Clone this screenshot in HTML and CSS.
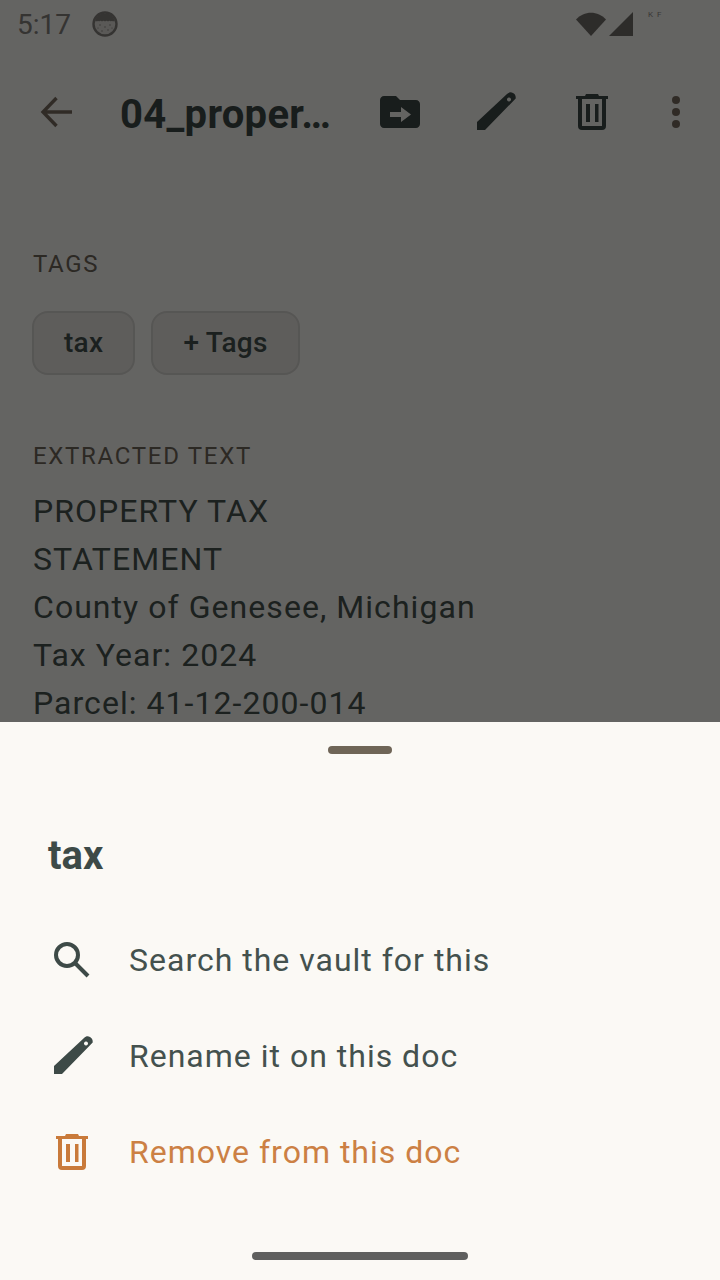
FILE: index.html
```html
<!DOCTYPE html>
<html lang="en">
<head>
<meta charset="utf-8">
<title>Document</title>
<link rel="stylesheet" href="styles.css">
</head>
<body>
<div class="screen">
  <div class="status">
    <span class="clock">5:17</span>
    <svg class="status-app" width="28" height="28" viewBox="0 0 28 28">
      <circle cx="14" cy="14" r="11.500" fill="#e1dfda" stroke="#85827e" stroke-width="2.400"/>
      <path d="M4 11C6 5 10 3.500 14 3.500S22 5 24 11c-2 1-3-1-4 .5-1-1-2-1-3 0-1-1-2-1-3 0-1-1-2-1-3 0-1-1-2-1-3 0-1-1.500-2 .5-4-.5z" fill="#85827e"/>
      <g fill="#85827e"><circle cx="9" cy="15" r=".7"/><circle cx="14" cy="17" r=".7"/><circle cx="19" cy="15" r=".7"/><circle cx="11" cy="21" r=".7"/><circle cx="17" cy="20" r=".7"/><circle cx="7" cy="18" r=".6"/><circle cx="21" cy="18" r=".6"/></g>
    </svg>
    <span class="status-gap"></span>
    <svg class="status-radio" width="64" height="28" viewBox="0 0 64 28">
      <path d="M2 8.500C10-.5 24-.5 32 8.500L17 25z" fill="#716e69"/>
      <path d="M35 25 59 1V25z" fill="#716e69"/>
    </svg>
    <span class="tiny">K F</span>
  </div>

  <div class="toolbar">
    <svg class="back" width="48" height="48" viewBox="0 0 48 48">
      <path d="M40 24H11M24.500 10 11 24l13.500 14" fill="none" stroke="#786d60" stroke-width="3.400"/>
    </svg>
    <span class="doc-title">04_proper…</span>
    <div class="actions">
      <svg class="act" width="48" height="48" viewBox="0 0 24 24">
        <path fill-rule="evenodd" d="M20 6h-8l-2-2H4c-1.100 0-2 .9-2 2v12c0 1.100.9 2 2 2h16c1.100 0 2-.9 2-2V8c0-1.100-.9-2-2-2zM7 12h5.500V9.500l5 3.750-5 3.750v-2.500H7z" fill="#3d4a47"/>
      </svg>
      <svg class="act" width="48" height="48" viewBox="0 0 48 48">
        <path fill-rule="evenodd" d="M5 42v-8L35 6c2-2 4-2 6-1 2 1 3 3 2.700 5.500L13 42zM37 9.500a2 2 0 1 0 .01 0z" fill="#3d4a47"/>
      </svg>
      <svg class="act" width="48" height="48" viewBox="0 0 48 48">
        <path fill-rule="evenodd" d="M17 8l1-2h12l1 2h9v3H8V8zM10 11h28v27a4 4 0 0 1-4 4H14a4 4 0 0 1-4-4zM14 11v27h20V11zM18 16h4v18h-4zM27 16h3.500v18H27z" fill="#3d4a47"/>
      </svg>
      <svg class="more" width="48" height="48" viewBox="0 0 48 48">
        <circle cx="24" cy="12" r="4" fill="#786d60"/><circle cx="24" cy="24" r="4" fill="#786d60"/><circle cx="24" cy="36" r="4" fill="#786d60"/>
      </svg>
    </div>
  </div>

  <main class="content">
    <h2 class="label label-tags">TAGS</h2>
    <div class="chips">
      <span class="chip">tax</span>
      <span class="chip">+ Tags</span>
    </div>
    <h2 class="label label-text">EXTRACTED TEXT</h2>
    <p class="extract">PROPERTY TAX<br>STATEMENT<br>County of Genesee, Michigan<br>Tax Year: 2024<br>Parcel: 41-12-200-014<br>Assessed Value: $84,300</p>
  </main>
</div>

<div class="scrim"></div>

<section class="sheet">
  <div class="grabber"></div>
  <h1 class="sheet-title">tax</h1>
  <ul class="menu">
    <li class="item">
      <svg class="icon" width="48" height="48" viewBox="0 0 48 48">
        <circle cx="19" cy="19" r="11" fill="none" stroke="#3d4a47" stroke-width="4"/>
        <path d="M27 27 40 40" fill="none" stroke="#3d4a47" stroke-width="4"/>
      </svg>
      <span>Search the vault for this</span>
    </li>
    <li class="item">
      <svg class="icon" width="48" height="48" viewBox="0 0 48 48">
        <path fill-rule="evenodd" d="M6 42v-8L36 6c2-2 4-2 6-1 2 1 3 3 2.700 5.500L14 42zM38 9.500a2 2 0 1 0 .01 0z" fill="#3d4a47"/>
      </svg>
      <span>Rename it on this doc</span>
    </li>
    <li class="item item-danger">
      <svg class="icon" width="48" height="48" viewBox="0 0 48 48">
        <path fill-rule="evenodd" d="M17 8l1-2h12l1 2h9v3H8V8zM10 11h28v27a4 4 0 0 1-4 4H14a4 4 0 0 1-4-4zM14 11v27h20V11zM18 16h4v18h-4zM27 16h3.500v18H27z" fill="#c97a3a"/>
      </svg>
      <span>Remove from this doc</span>
    </li>
  </ul>
  <div class="home"></div>
</section>
</body>
</html>
```
FILE: styles.css
```css
* { box-sizing: border-box; }
html, body { margin: 0; height: 100%; }
body {
  width: 720px;
  height: 1280px;
  position: relative;
  overflow: hidden;
  background: #fbf9f5;
  font-family: Roboto, "Noto Sans", sans-serif;
  color: #3d4a47;
}
.screen { display: flex; flex-direction: column; height: 1280px; overflow: hidden; }

.status {
  height: 48px;
  display: flex;
  align-items: center;
  padding: 0 60px 0 17px;
}
.clock { font-size: 28px; color: #85827e; width: 54px; }
.status-app { margin-left: 20px; }
.status-gap { flex: 1; }
.status-radio { margin-top: 1px; }
.tiny { margin-left: 10px; font-size: 8px; letter-spacing: 1px; color: #8f8c88; width: 12px; height: 28px; line-height: 10px; white-space: nowrap; }

.toolbar {
  height: 112px;
  margin-top: 8px;
  display: flex;
  align-items: center;
  padding: 0 20px 0 32px;
}
.back { flex: none; }
.doc-title {
  margin-left: 40px;
  font-size: 40px;
  font-weight: 700;
  letter-spacing: .3px;
  color: #3d4a47;
  white-space: nowrap;
  flex: none;
  position: relative;
  top: 2px;
}
.actions { margin-left: auto; display: flex; align-items: center; gap: 48px; }
.act { flex: none; }
.more { flex: none; margin-left: -12px; }

.content { padding: 0 33px; flex: 1; }
.label {
  margin: 0;
  font-size: 24px;
  line-height: 30px;
  font-weight: 400;
  letter-spacing: 1.700px;
  color: #6f665a;
}
.label-tags { margin-top: 81px; }
.label-text { margin-top: 66px; }
.chips { display: flex; gap: 16px; margin: 32px 0 0 -1px; }
.chip {
  height: 64px;
  padding: 0 30px 2px;
  display: flex;
  align-items: center;
  border: 2px solid #d8d6d2;
  border-radius: 16px;
  background: #ebe9e4;
  font-size: 28px;
  font-weight: 500;
  letter-spacing: .3px;
  color: #44514e;
}
.extract {
  margin: 16px 0 0;
  font-size: 32px;
  line-height: 48px;
  letter-spacing: 1.050px;
  color: #46534f;
}

.scrim { position: absolute; inset: 0; background: rgba(0, 0, 0, .6); }

.sheet {
  position: absolute;
  left: 0;
  right: 0;
  top: 722px;
  bottom: 0;
  background: #fbf9f5;
  display: flex;
  flex-direction: column;
  align-items: stretch;
}
.grabber {
  width: 64px;
  height: 8px;
  margin: 24px auto 0;
  border-radius: 4px;
  background: #6f6557;
}
.sheet-title {
  margin: 78px 0 0 48px;
  font-size: 40px;
  line-height: 48px;
  font-weight: 700;
  color: #3d4a47;
}
.menu { list-style: none; margin: 32px 0 0; padding: 0; }
.item {
  height: 96px;
  display: flex;
  align-items: center;
  padding-left: 48px;
  gap: 33px;
  font-size: 32px;
  letter-spacing: 1px;
  color: #44514e;
}
.item-danger { color: #cc8044; }
.icon { flex: none; }
.home {
  position: absolute;
  left: 252px;
  bottom: 20px;
  width: 216px;
  height: 8px;
  border-radius: 4px;
  background: #5f5f5e;
}
```
